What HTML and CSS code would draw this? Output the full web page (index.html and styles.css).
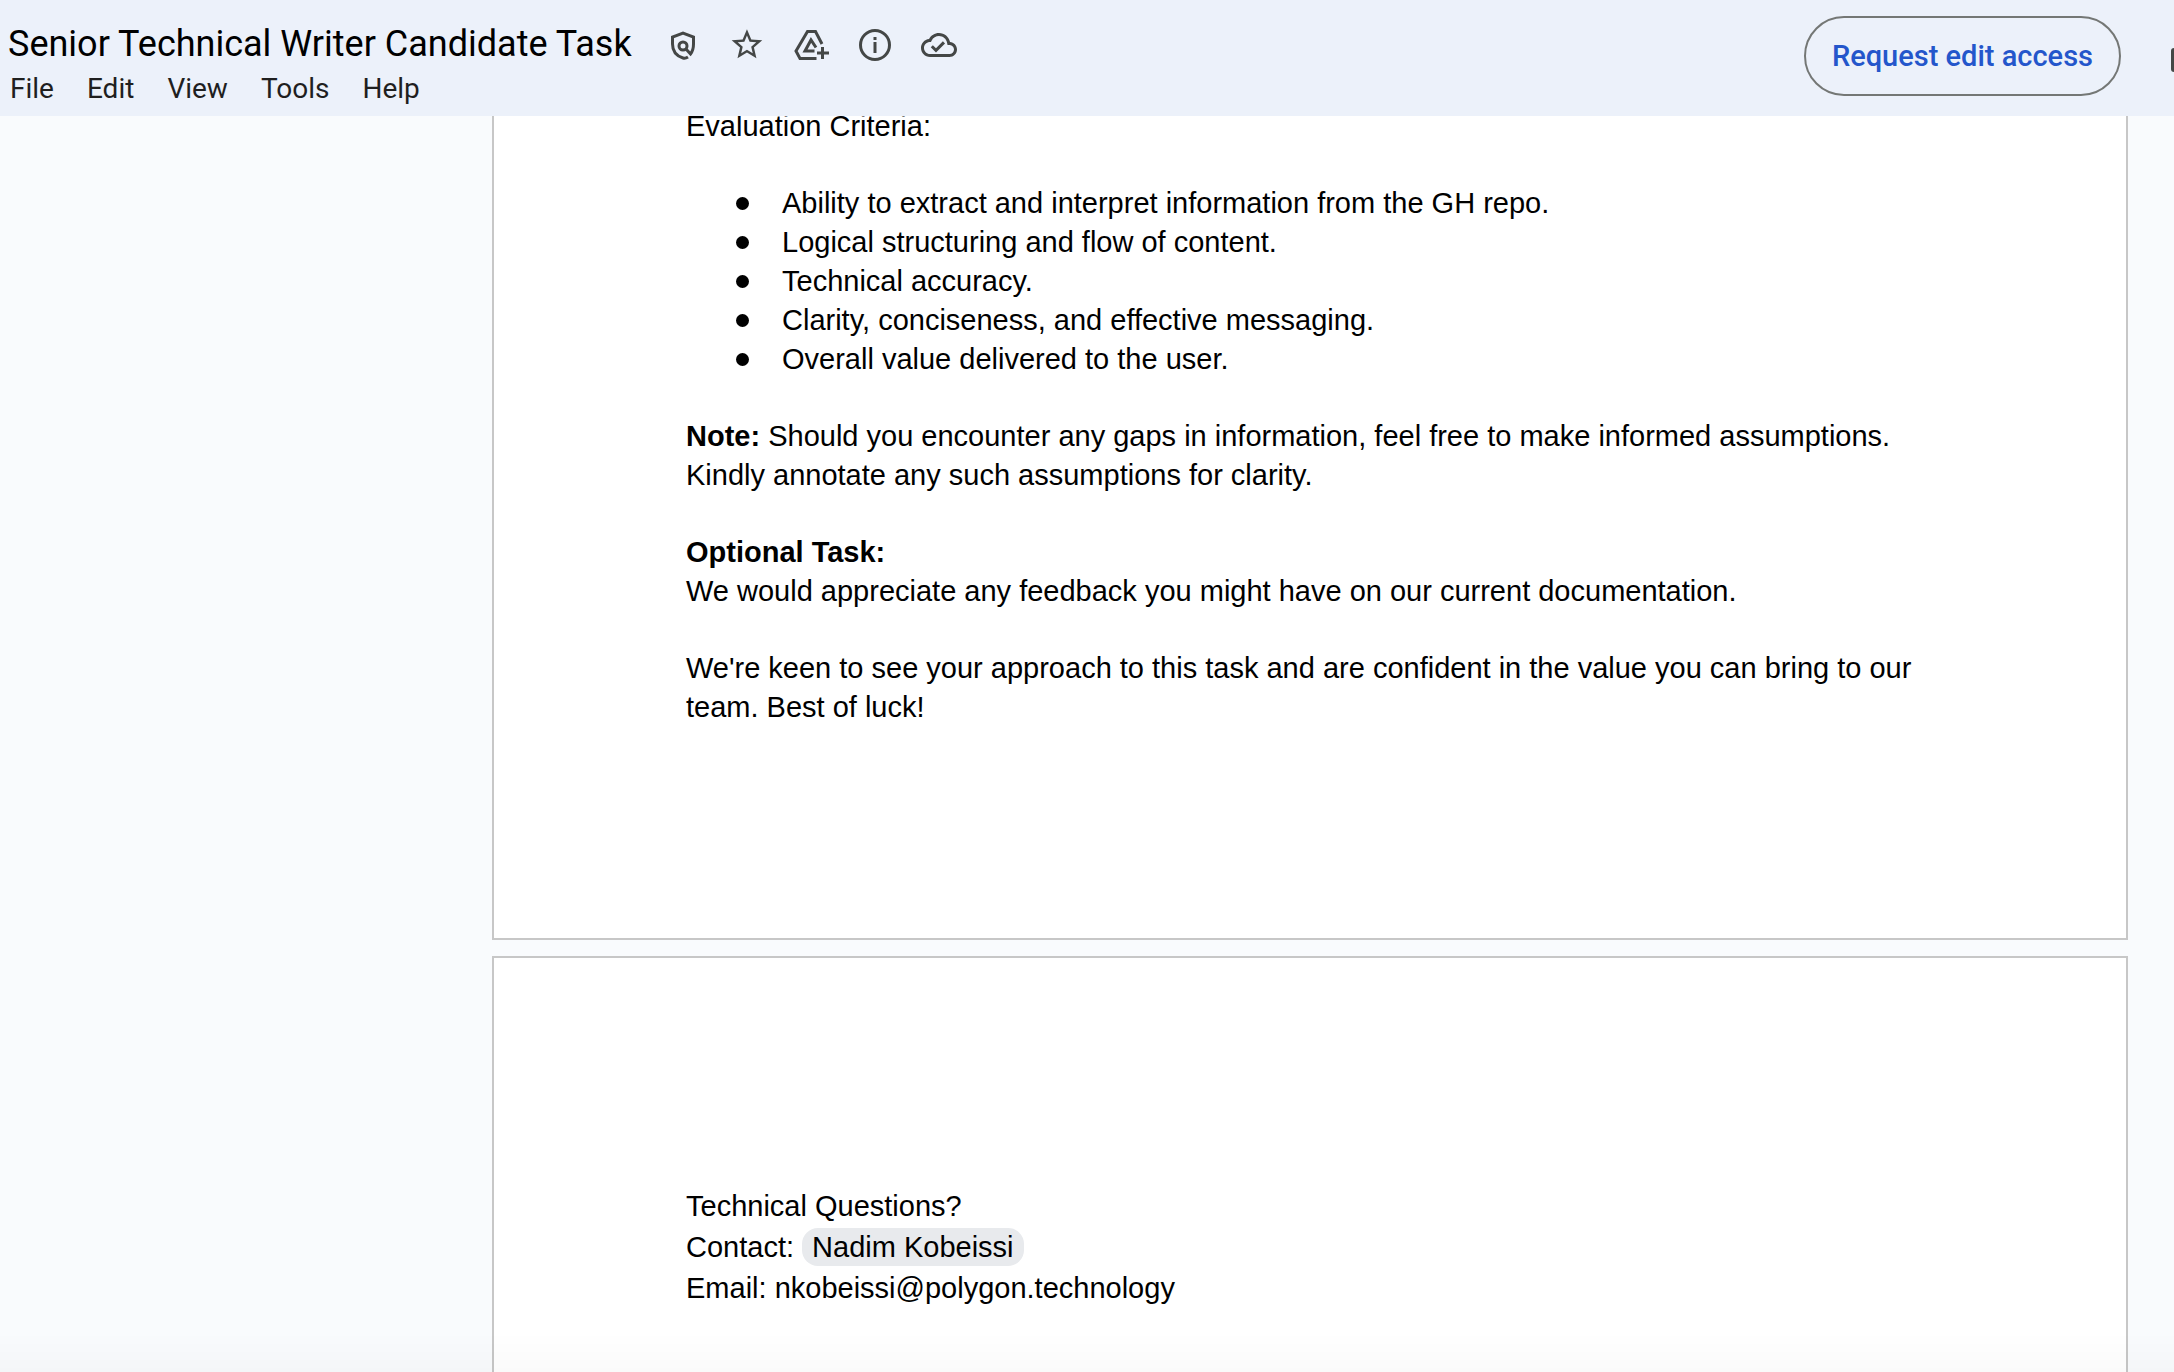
FILE: index.html
```html
<!DOCTYPE html>
<html lang="en">
<head>
<meta charset="utf-8">
<title>Senior Technical Writer Candidate Task</title>
<link rel="stylesheet" href="styles.css">
</head>
<body>
<header class="topbar">
  <div class="heading">
    <div class="title-row">
      <h1 class="title">Senior Technical Writer Candidate Task</h1>
      <div class="title-icons">
        <button class="icon-button" aria-label="Security">
          <svg viewBox="0 0 40 40"><path d="M25 31C23.500 32 21.500 32.500 20 32C13.500 30 9.500 25 9.500 18V11L20 7L30.500 11V18C30.500 22 29.500 25.500 27.500 28L23 23"/><circle cx="20" cy="20" r="4"/></svg>
        </button>
        <button class="icon-button" aria-label="Star">
          <svg viewBox="0 0 40 40"><path class="solid" transform="translate(1.6 0.2) scale(1.53)" d="M22 9.240l-7.190-.62L12 2 9.190 8.630 2 9.240l5.460 4.730L5.820 21 12 17.270 18.180 21l-1.630-7.030L22 9.240zM12 15.400l-3.760 2.270 1-4.280-3.320-2.880 4.380-.38L12 6.100l1.710 4.040 4.380.38-3.320 2.880 1 4.280L12 15.400z"/></svg>
        </button>
        <button class="icon-button" aria-label="Add shortcut to Drive">
          <svg viewBox="0 0 40 40"><path d="M31 18L24.500 5.500H16.500L5 25L9 32.500H25.500"/><path d="M25 21.500L20 14L14 25H23.500"/><path d="M31.500 21V33M26 27H38"/></svg>
        </button>
        <button class="icon-button" aria-label="Details">
          <svg viewBox="0 0 40 40"><circle cx="20" cy="19" r="14.500"/><path d="M20 16V27M20 11V14"/></svg>
        </button>
        <button class="icon-button" aria-label="Document status">
          <svg viewBox="0 0 40 40"><path class="solid" transform="translate(2 1) scale(1.5)" d="M19.350 10.040C18.670 6.590 15.640 4 12 4 9.110 4 6.600 5.640 5.350 8.040 2.340 8.360 0 10.910 0 14c0 3.310 2.690 6 6 6h13c2.760 0 5-2.240 5-5 0-2.640-2.050-4.780-4.650-4.960zM19 18H6c-2.210 0-4-1.790-4-4 0-2.050 1.530-3.760 3.560-3.970l1.070-.11.5-.95C8.080 7.140 9.940 6 12 6c2.620 0 4.880 1.860 5.390 4.430l.3 1.500 1.530.11c1.560.1 2.780 1.410 2.780 2.960 0 1.650-1.350 3-3 3zm-9-3.820l-2.090-2.090L6.500 13.500 10 17l6.010-6.010-1.410-1.410z"/></svg>
        </button>
      </div>
    </div>
    <nav class="menu" aria-label="Menu">
      <button class="menu-item">File</button>
      <button class="menu-item">Edit</button>
      <button class="menu-item">View</button>
      <button class="menu-item">Tools</button>
      <button class="menu-item">Help</button>
    </nav>
  </div>
  <div class="actions">
    <button class="request">Request edit access</button>
    <button class="call-button" aria-label="Join a call">
      <svg viewBox="0 0 32 24"><rect class="solid" width="23" height="24" rx="3"/><path class="solid" d="M24 10L31 4V20L24 14"/></svg>
    </button>
  </div>
</header>
<main class="canvas">
  <article class="page page-first">
    <p>Evaluation Criteria:</p>
    <ul class="criteria">
      <li>Ability to extract and interpret information from the GH repo.</li>
      <li>Logical structuring and flow of content.</li>
      <li>Technical accuracy.</li>
      <li>Clarity, conciseness, and effective messaging.</li>
      <li>Overall value delivered to the user.</li>
    </ul>
    <p><strong>Note:</strong> Should you encounter any gaps in information, feel free to make informed assumptions. Kindly annotate any such assumptions for clarity.</p>
    <section>
      <h2>Optional Task:</h2>
      <p>We would appreciate any feedback you might have on our current documentation.</p>
    </section>
    <p>We're keen to see your approach to this task and are confident in the value you can bring to our team. Best of luck!</p>
  </article>
  <article class="page page-contact">
    <p>Technical Questions?</p>
    <p>Contact: <button class="chip">Nadim Kobeissi</button></p>
    <p>Email: nkobeissi@polygon.technology</p>
  </article>
</main>
<div class="bottom-shade"></div>
</body>
</html>
```
FILE: styles.css
```css
* {
  box-sizing: border-box;
}

body {
  display: flex;
  flex-direction: column;
  height: 100vh;
  margin: 0;
  overflow: hidden;
  background: #f9fbfd;
  color: #000;
  font-family: "Liberation Sans", Arial, sans-serif;
}

h1, h2, p, ul {
  margin: 0;
  padding: 0;
}

button {
  margin: 0;
  padding: 0;
  border: 0;
  background: none;
  color: inherit;
  font: inherit;
  cursor: pointer;
}

svg {
  display: block;
  width: 100%;
  fill: none;
  stroke: #444746;
  stroke-width: 3;
}

.solid {
  fill: #444746;
  stroke: none;
}

/* Top bar */
.topbar {
  display: flex;
  flex: none;
  justify-content: space-between;
  height: 116px;
  overflow: hidden;
  background: #ecf1fa;
  font-family: Roboto, sans-serif;
}

.heading {
  padding: 20px 0 0 8px;
}

.title-row {
  display: flex;
  align-items: center;
  gap: 31px;
}

.title {
  font-size: 36px;
  font-weight: 400;
  line-height: 48px;
  white-space: nowrap;
}

.title-icons {
  display: flex;
  gap: 24px;
  padding-top: 4px;
}

.icon-button {
  width: 40px;
  height: 40px;
}

.menu {
  display: flex;
  gap: 33px;
  padding: 1px 0 0 2px;
}

.menu-item {
  color: #1f1f1f;
  font-size: 28px;
  line-height: 40px;
}

.actions {
  display: flex;
  align-items: flex-start;
  gap: 50px;
  margin-right: -29px;
  padding-top: 16px;
}

.request {
  height: 80px;
  padding: 0 26px;
  border: 2px solid #747775;
  border-radius: 40px;
  color: #2456cb;
  font-size: 29px;
  font-weight: 500;
  white-space: nowrap;
}

.call-button {
  width: 32px;
  height: 24px;
  margin-top: 32px;
}

/* Document */
.canvas {
  flex: 1;
  min-height: 0;
  padding: 0 46px 0 492px;
  overflow-y: auto;
  scrollbar-width: none;
}

.page {
  border: 2px solid #c7c7c7;
  background: #fff;
  font-size: 29px;
}

.page-first {
  display: flex;
  flex-direction: column;
  gap: 38px;
  margin-top: -9px;
  padding: 0 192px 211px;
  border-top: 0;
  line-height: 39px;
}

.page h2 {
  font-size: 29px;
}

.criteria {
  list-style: none;
}

.criteria li {
  display: flex;
  gap: 33px;
  padding-left: 50px;
}

.criteria li::before {
  flex: none;
  width: 13px;
  height: 13px;
  margin-top: 13px;
  border-radius: 50%;
  background: #000;
  content: "";
}

.page-contact {
  min-height: 2112px;
  margin-top: 16px;
  padding: 228px 192px 192px;
  line-height: 41px;
}

.chip {
  padding: 0 10px;
  border-radius: 16px;
  background: #e8eaed;
  line-height: 38px;
}

/* Soft shade along the lower edge of the window */
.bottom-shade {
  position: fixed;
  right: 0;
  bottom: 0;
  left: 0;
  height: 40px;
  background: linear-gradient(rgba(0, 0, 0, 0), rgba(0, 0, 0, 0.02));
  pointer-events: none;
}
```
